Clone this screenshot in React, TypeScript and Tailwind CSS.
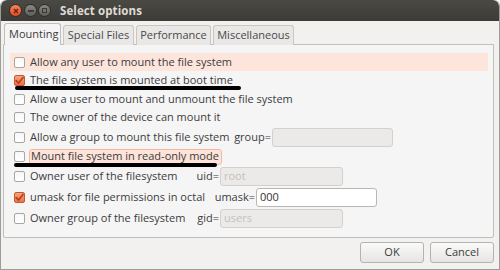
import React from "react";

type Field = { prefix: string; value?: string; placeholder?: string; enabled?: boolean; width: string };

type Row = {
  label: string;
  checked?: boolean;
  h: string;
  highlight?: "row" | "label";
  labelW?: string;
  field?: Field;
};

const rows: Row[] = [
  { label: "Allow any user to mount the file system", h: "h-[18px]", highlight: "row" },
  { label: "The file system is mounted at boot time", checked: true, h: "h-[19px]" },
  { label: "Allow a user to mount and unmount the file system", h: "h-[18px]" },
  { label: "The owner of the device can mount it", h: "h-[19px]" },
  {
    label: "Allow a group to mount this file system",
    h: "h-[20px]",
    labelW: "w-[257px]",
    field: { prefix: "group=", width: "w-[121px]" },
  },
  { label: "Mount file system in read-only mode", h: "h-[19px]", highlight: "label" },
  {
    label: "Owner user of the filesystem",
    h: "h-[21px]",
    labelW: "w-[205px]",
    field: { prefix: "uid=", placeholder: "root", width: "w-[123px]" },
  },
  {
    label: "umask for file permissions in octal",
    checked: true,
    h: "h-[21px]",
    labelW: "w-[241px]",
    field: { prefix: "umask=", value: "000", enabled: true, width: "w-[121px]" },
  },
  {
    label: "Owner group of the filesystem",
    h: "h-[20px]",
    labelW: "w-[205px]",
    field: { prefix: "gid=", placeholder: "users", width: "w-[123px]" },
  },
];

function Check({ checked }: { checked?: boolean }) {
  if (checked) {
    return (
      <span className="w-[11px] h-[11px] shrink-0 rounded-[2px] border border-[#c9572f] bg-gradient-to-b from-[#f6a37f] to-[#e97447] flex items-center justify-center">
        <svg width="9" height="9" viewBox="0 0 9 9">
          <path d="M1.2 4.6 L3.6 7 L8 1.4" stroke="#b23f17" strokeWidth="1.6" fill="none" strokeLinecap="round" />
        </svg>
      </span>
    );
  }
  return <span className="w-[11px] h-[11px] shrink-0 rounded-[2px] border border-[#a8a6a2] bg-gradient-to-b from-[#f7f7f7] to-white" />;
}

export default function App() {
  return (
    <div
      className="w-[500px] h-[270px] bg-[#f2f1f0] text-[#3c3c3c] overflow-hidden flex flex-col border border-[#9d9c99] border-t-0 rounded-t-[6px] relative"
      style={{ fontFamily: '"Open Sans", "Liberation Sans", sans-serif' }}
    >
      {/* Title bar */}
      <div className="h-[21px] shrink-0 bg-gradient-to-b from-[#4a4944] to-[#3c3b37] flex items-center pl-[8px] rounded-t-[6px]">
        <span className="w-[13px] h-[13px] rounded-full bg-gradient-to-b from-[#f6845a] to-[#e0491c] border border-[#3a2a22] flex items-center justify-center">
          <svg width="6" height="6" viewBox="0 0 6 6">
            <path d="M1 1 L5 5 M5 1 L1 5" stroke="#5a2312" strokeWidth="1.3" />
          </svg>
        </span>
        <span className="w-[13px] h-[13px] ml-[2px] rounded-full bg-gradient-to-b from-[#8a8883] to-[#5f5e5a] border border-[#2f2e2b] flex items-center justify-center">
          <span className="w-[6px] h-[2px] bg-[#3c3b37]" />
        </span>
        <span className="w-[13px] h-[13px] ml-[1px] rounded-full bg-gradient-to-b from-[#8a8883] to-[#5f5e5a] border border-[#2f2e2b] flex items-center justify-center">
          <span className="w-[5px] h-[5px] border border-[#3c3b37]" />
        </span>
        <span className="ml-[9px] text-[11.5px] font-bold text-[#dfdbd2] tracking-[0.1px]">Select options</span>
      </div>

      {/* Tabs */}
      <div className="flex items-end pl-[3px] mt-[2px] h-[22px] text-[11px] relative z-10">
        <div className="h-[22px] pl-[4px] w-[57px] bg-[#f5f5f5] border border-b-0 border-[#c1bfbb] rounded-t-[3px] flex items-center">Mounting</div>
        <div className="h-[20px] ml-[2px] w-[71px] bg-[#e9e8e6] border border-b-0 border-[#c9c7c3] rounded-t-[3px] flex items-center justify-center text-[#4a4a4a]">Special Files</div>
        <div className="h-[20px] ml-[2px] w-[75px] bg-[#e9e8e6] border border-b-0 border-[#c9c7c3] rounded-t-[3px] flex items-center justify-center text-[#4a4a4a]">Performance</div>
        <div className="h-[20px] ml-[2px] w-[81px] bg-[#e9e8e6] border border-b-0 border-[#c9c7c3] rounded-t-[3px] flex items-center justify-center text-[#4a4a4a]">Miscellaneous</div>
      </div>

      {/* Panel */}
      <div className="ml-[2px] w-[491px] h-[194px] -mt-px bg-[#f5f5f5] border border-[#c1bfbb] rounded-b-[2px] pt-[8px] pl-[6px] text-[11px]">
        {rows.map((r, i) => (
          <div
            key={i}
            className={`${r.h} flex items-center pl-[4px] w-[478px] ${r.highlight === "row" ? "bg-[#fde5dc]" : ""}`}
          >
            <div className={`flex items-center ${r.labelW ?? ""}`}>
              <Check checked={r.checked} />
              <span
                className={`whitespace-nowrap ${
                  r.highlight === "label"
                    ? "ml-[4px] h-[16px] pl-[1px] pr-[2px] bg-[#fde3d8] border border-[#f1b9a4] rounded-[3px] flex items-center"
                    : "ml-[5px]"
                }`}
              >
                {r.label}
              </span>
              {r.field && <span className="ml-auto">{r.field.prefix}</span>}
            </div>
            {r.field && (
              <div
                className={`${r.field.width} h-[19px] ml-[1px] rounded-[3px] border flex items-center px-[3px] ${
                  r.field.enabled ? "bg-white border-[#b9b7b3] text-[#333]" : "bg-[#ebeae8] border-[#d3d1ce] text-[#c4c2bf]"
                }`}
              >
                {r.field.value ?? r.field.placeholder ?? ""}
              </div>
            )}
          </div>
        ))}
      </div>

      {/* Buttons */}
      <div className="flex justify-end gap-[6px] pr-[5px] mt-[4px]">
        <button className="w-[64px] h-[21px] rounded-[3px] border border-[#b5b3af] bg-gradient-to-b from-[#fafaf9] to-[#e6e5e3] text-[11px] text-[#3c3c3c]">OK</button>
        <button className="w-[64px] h-[21px] rounded-[3px] border border-[#b5b3af] bg-gradient-to-b from-[#fafaf9] to-[#e6e5e3] text-[11px] text-[#3c3c3c]">Cancel</button>
      </div>

      {/* Annotation underlines drawn over the screenshot */}
      <div className="absolute left-[14px] top-[86px] w-[226px] h-[4px] rounded-full bg-black" />
      <div className="absolute left-[13px] top-[163px] w-[203px] h-[4px] rounded-full bg-black" />
    </div>
  );
}
